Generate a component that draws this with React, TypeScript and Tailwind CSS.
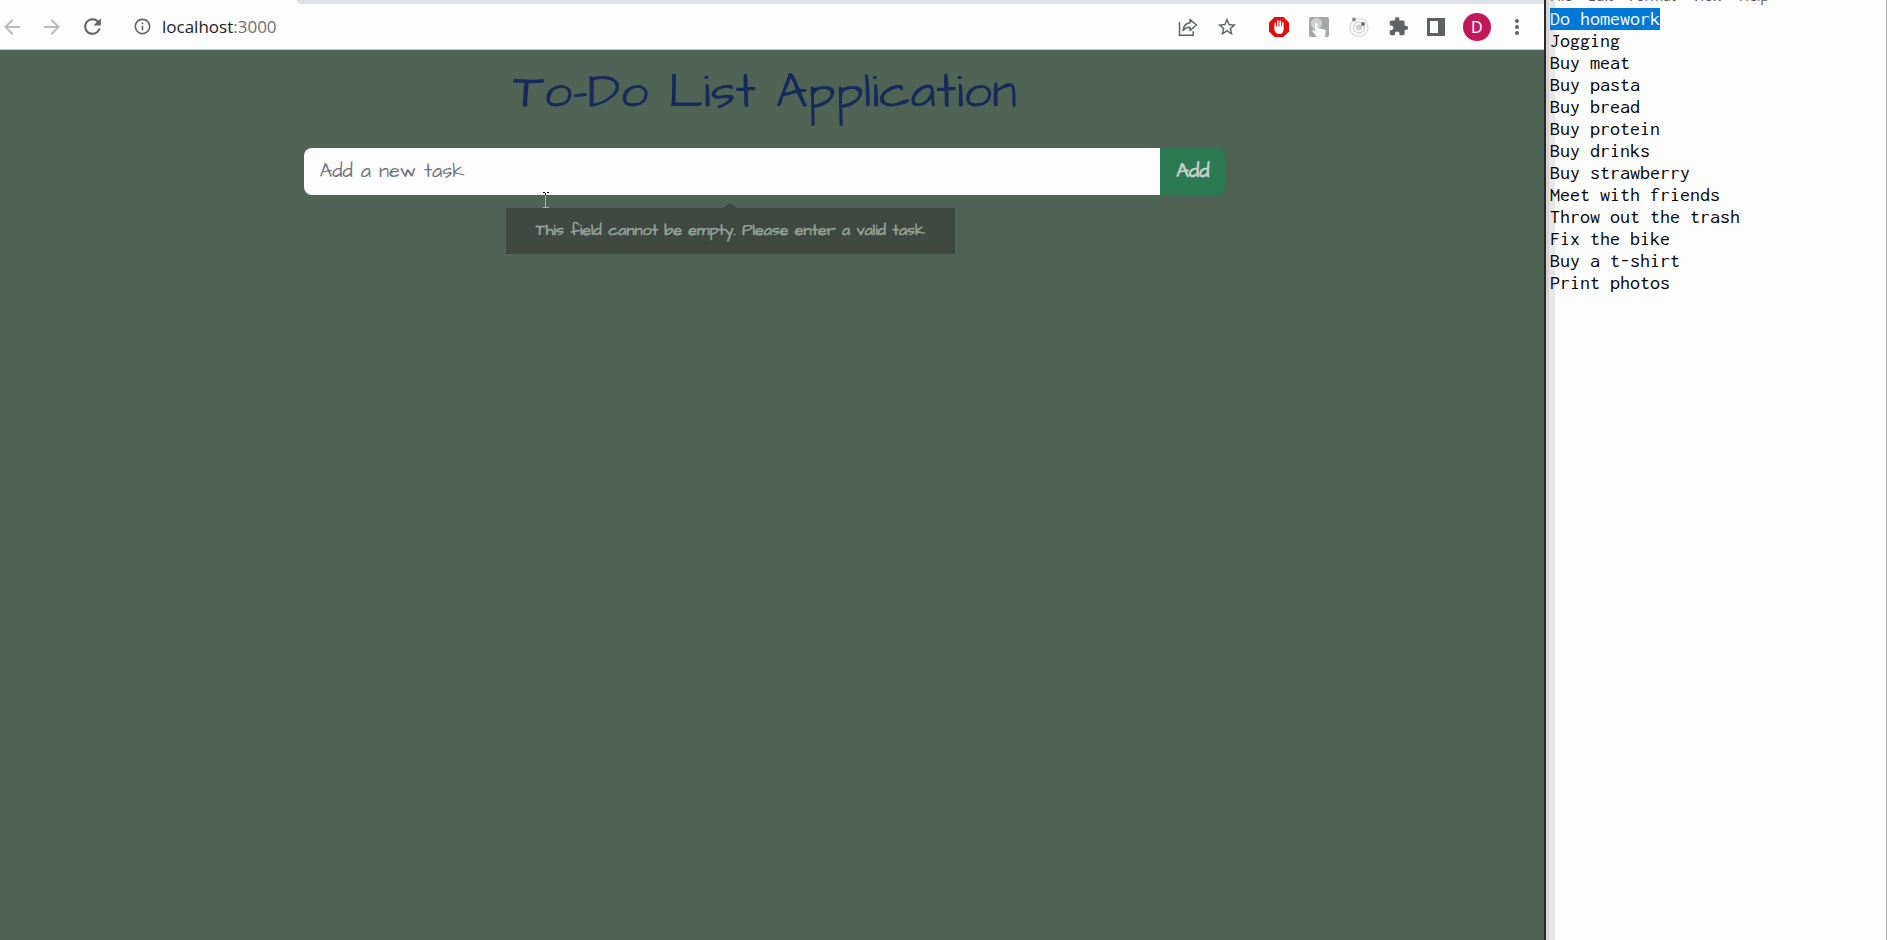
import React from "react";
import { MdArrowBack, MdArrowForward, MdRefresh, MdInfoOutline, MdStarBorder, MdExtension, MdMoreVert } from "react-icons/md";

const tasks = [
  "Do homework",
  "Jogging",
  "Buy meat",
  "Buy pasta",
  "Buy bread",
  "Buy protein",
  "Buy drinks",
  "Buy strawberry",
  "Meet with friends",
  "Throw out the trash",
  "Fix the bike",
  "Buy a t-shirt",
  "Print photos",
];

const menus = ["File", "Edit", "Format", "View", "Help"];

function ShareIcon() {
  return (
    <svg viewBox="0 0 20 20" className="size-5" fill="none" stroke="#5f6368" strokeWidth="1.5">
      <path d="M1.500 5v13.200h13.700v-4" />
      <path d="M12 2.500l6.500 5.500-6.500 5.500v-3.300C9 10.200 6.800 11 5 13.500 5.500 9.500 8 6.200 12 5.700z" strokeLinejoin="round" />
    </svg>
  );
}

function BlockerIcon() {
  return (
    <svg viewBox="0 0 22 22" className="size-[22px]">
      <path d="M6.500 1h9L21 6.500v9L15.500 21h-9L1 15.500v-9z" fill="#e40d0d" />
      <path d="M7.300 12.500V7.200M9.800 11V5M12.300 11V5.300M14.700 13V7" stroke="#fff" strokeWidth="1.600" strokeLinecap="round" />
      <path d="M6.500 10.500h9v3c0 2.500-1.300 4.500-4 4.500-2.800 0-5-2-5-4.800z" fill="#fff" />
    </svg>
  );
}

function TouchIcon() {
  return (
    <svg viewBox="0 0 22 22" className="size-[22px]">
      <rect x="1" y="1" width="20" height="20" rx="2" fill="#a3a8a6" />
      <circle cx="8.500" cy="7.500" r="5.500" fill="#cfcfcf" />
      <path d="M7 8c0-1.500 2.500-1.500 2.500 0v4l7 1.500c1 .3 1.500 1 1.300 2L17 21H9l-4.500-5.500c-.5-1 .5-1.800 1.300-1.200L7 15.200z" fill="#fafafa" />
    </svg>
  );
}

function OrbitIcon() {
  return (
    <svg viewBox="0 0 22 22" className="size-[22px]" fill="none">
      <circle cx="11" cy="11.500" r="9" stroke="#d6d6d6" strokeWidth="1.200" />
      <circle cx="11" cy="11.500" r="5.500" stroke="#d6d6d6" strokeWidth="1.400" />
      <circle cx="11" cy="11.500" r="3" fill="#cfcfcf" />
      <circle cx="6" cy="3.500" r="2" fill="#8a8a8a" />
      <circle cx="15" cy="8" r="2" fill="#6d6d6d" />
    </svg>
  );
}

function PanelIcon() {
  return (
    <svg viewBox="0 0 18 18" className="size-[18px]">
      <path fillRule="evenodd" d="M0 0h18v18H0zM3 3v12h8V3z" fill="#5b6167" />
    </svg>
  );
}

function TextCursor() {
  return (
    <svg viewBox="0 0 8 16" className="absolute left-[238px] top-11 h-4 w-2" fill="none">
      <path d="M1 .5h2M5 .5h2M3.500 1v2" stroke="#000" />
      <path d="M3.500 3v12M1 15.500h6" stroke="#b5a9ae" />
    </svg>
  );
}

function Toolbar() {
  return (
    <header className="flex h-[50px] flex-col border-b border-[#c9cbc9] bg-[#fdfdfd] text-[#5f6368]">
      <div className="ml-[297px] h-1 shrink-0 rounded-bl-lg bg-[#dee1e6]" />
      <div className="flex flex-1 items-center">
        <button aria-label="Back" className="text-[#b8babc]"><MdArrowBack size={24} /></button>
        <button aria-label="Forward" className="ml-4 text-[#b8babc]"><MdArrowForward size={24} /></button>
        <button aria-label="Reload" className="ml-4"><MdRefresh size={25} /></button>
        <button aria-label="Site information" className="ml-7"><MdInfoOutline size={19} /></button>
        <span className="ml-2.5 font-['Segoe_UI','Open_Sans',sans-serif] text-[17px] text-[#202124]">
          localhost<span className="text-[#6b6f73]">:3000</span>
        </span>
        <div className="ml-auto flex items-center pr-[15px]">
          <button aria-label="Share"><ShareIcon /></button>
          <button aria-label="Bookmark" className="ml-[18px]"><MdStarBorder size={22} /></button>
          <button aria-label="Ad blocker" className="ml-[30px]"><BlockerIcon /></button>
          <button aria-label="Touch extension" className="ml-[18px]"><TouchIcon /></button>
          <button aria-label="Orbit extension" className="ml-[18px]"><OrbitIcon /></button>
          <button aria-label="Extensions" className="ml-[18px]"><MdExtension size={21} /></button>
          <button aria-label="Side panel" className="ml-[18px]"><PanelIcon /></button>
          <button aria-label="Profile" className="ml-[18px] size-7 rounded-full bg-[#c2185b] font-['Noto_Sans',sans-serif] text-base text-white">D</button>
          <button aria-label="More" className="ml-3.5"><MdMoreVert size={24} /></button>
        </div>
      </div>
    </header>
  );
}

export default function App() {
  return (
    <div className="grid min-h-screen grid-cols-[minmax(0,9fr)_minmax(0,2fr)] bg-[#fdfdfd]">
      <div className="flex flex-col bg-[#4f6454]">
        <Toolbar />
        <main className="flex flex-col items-center pr-3.5 font-['Architects_Daughter',Lato,sans-serif]">
          <h1 className="mt-[13px] text-[50px] leading-[60px] text-[#162a5c]">To-Do List Application</h1>
          <form className="mt-[25px] flex h-[47px] w-[60.2%]" onSubmit={(e) => e.preventDefault()}>
            <div className="relative min-w-0 flex-1">
              <input
                aria-label="Add a new task"
                placeholder="Add a new task"
                className="h-full w-full rounded-l-lg bg-[#fdfdfd] px-[15px] pb-0.5 text-xl text-gray-800 outline-none placeholder:text-[#6c757d]"
              />
              <TextCursor />
              <div role="tooltip" className="absolute left-0 right-1 top-full mt-2 flex flex-col items-center">
                <svg viewBox="0 0 14 5" className="h-[5px] w-3.5"><path d="M0 5l7-5 7 5z" fill="#3f4941" /></svg>
                <p className="bg-[#3f4941] px-[30px] pt-2.5 pb-3 text-base leading-6 font-bold whitespace-nowrap text-[#919f95]">
                  This field cannot be empty. Please enter a valid task
                </p>
              </div>
            </div>
            <button className="rounded-r-lg bg-[#2b7a52] px-4 pb-0.5 text-xl font-bold text-[#c6cec8]">Add</button>
          </form>
        </main>
      </div>
      <aside className="overflow-hidden border-r border-l-2 border-r-[#a8a8a8] border-l-[#262a28] bg-[linear-gradient(to_right,#d9d3d6_3px,#e5e5e5_3px,#e5e5e5_9px,#fdfdfd_9px)]">
        <nav className="flex h-2 items-end gap-4 pl-1 font-['Segoe_UI','Open_Sans',sans-serif] text-sm leading-6 text-[#555]">
          {menus.map((m) => <span key={m}>{m}</span>)}
        </nav>
        <ul className="pl-1 font-['Consolas','Inconsolata',monospace] text-xl leading-[22px] text-black">
          {tasks.map((t, i) => (
            <li key={t}>
              <span className={i === 0 ? "inline-block bg-[#0078d7] text-white" : ""}>{t}</span>
            </li>
          ))}
        </ul>
      </aside>
    </div>
  );
}
